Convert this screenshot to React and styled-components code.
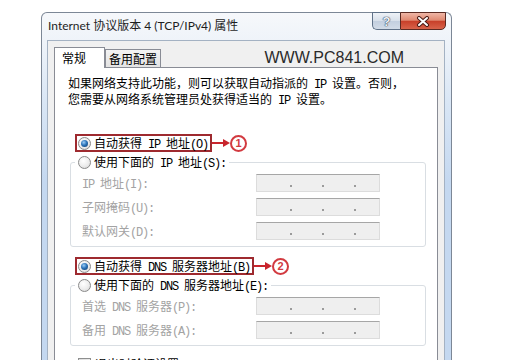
import React from "react";
import styled, { createGlobalStyle } from "styled-components";

const GlobalStyle = createGlobalStyle`
  html, body { margin: 0; padding: 0; background: #fff; }
  body { width: 520px; height: 360px; overflow: hidden; }
`;

const SONG = `"Noto Sans CJK SC", "Noto Sans", sans-serif`;

const Page = styled.div`
  box-sizing: border-box;
  height: 360px;
  overflow: hidden;
  padding: 12px 0 0 41px;
`;

const Window = styled.div`
  box-sizing: border-box;
  width: 411px;
  height: 400px;
  border: 1px solid #7c8796;
  border-bottom: none;
  border-radius: 6px 6px 0 0;
  background: linear-gradient(to bottom, #f6f8fb 0px, #eef3f9 30px, #d9e6f5 90px, #c4d8f0 170px);
  display: flex;
  flex-direction: column;
  padding: 0 6px 0 5px;
`;

const TitleBar = styled.div`
  height: 27px;
  display: flex;
  align-items: flex-start;
  padding-left: 1px;
`;

const Title = styled.div`
  font-family: Lato, "Noto Sans CJK SC", sans-serif;
  font-size: 12px;
  line-height: 25px;
  color: #1e1e1e;
  white-space: nowrap;
`;

const CaptionButtons = styled.div`
  margin-left: auto;
  margin-top: -1px;
  margin-right: -1px;
  display: flex;
`;

const HelpBtn = styled.div`
  box-sizing: border-box;
  width: 28px;
  height: 18px;
  border: 1px solid #5f7188;
  border-right: none;
  border-radius: 0 0 0 5px;
  background: linear-gradient(#eef2f7, #d8e0ea 48%, #c3cfdf 52%, #d2dbe7);
  display: grid;
  place-items: center;
  font-family: "Liberation Sans", sans-serif;
  font-weight: bold;
  font-size: 13px;
  line-height: 1;
  color: #eef2f7;
  text-shadow: 0 0 1px #3a4a60, 0 0 1px #3a4a60, 0 0 1px #3a4a60;
`;

const CloseBtn = styled.div`
  box-sizing: border-box;
  width: 46px;
  height: 18px;
  border: 1px solid #5b2a22;
  border-radius: 0 0 5px 0;
  background: linear-gradient(#efb6a6, #e08a72 45%, #c8402a 52%, #d8634a);
  display: grid;
  place-items: center;
`;

const Client = styled.div`
  flex: 1;
  box-sizing: border-box;
  background: #f0f0f0;
  border: 1px solid #a4b2c3;
  border-bottom: none;
  padding: 6px 6px 0 6px;
  display: flex;
  flex-direction: column;
`;

const TabStrip = styled.div`
  display: flex;
  align-items: flex-end;
  height: 21px;
  margin-bottom: -1px;
  position: relative;
  z-index: 1;
`;

const Tab = styled.div`
  box-sizing: border-box;
  height: ${(p) => (p.$active ? "21px" : "18px")};
  margin-bottom: ${(p) => (p.$active ? "0" : "1px")};
  width: ${(p) => p.$w}px;
  border: 1px solid #898c95;
  border-bottom: none;
  background: ${(p) => (p.$active ? "#fff" : "linear-gradient(#f3f3f3, #e3e3e3)")};
  display: flex;
  align-items: center;
  justify-content: ${(p) => (p.$active ? "flex-start" : "center")};
  padding-left: ${(p) => (p.$active ? "7px" : "0")};
  padding-bottom: ${(p) => (p.$active ? "1px" : "0")};
  font-family: ${SONG};
  font-size: 12px;
  color: #000;
`;

const Watermark = styled.div`
  margin-left: auto;
  margin-right: 34px;
  align-self: center;
  font-family: "Liberation Sans", Arial, sans-serif;
  font-size: 16px;
  color: #2a2a2a;
  padding-top: 1px;
`;

const TabPanel = styled.div`
  flex: 1;
  background: #fff;
  border: 1px solid #898c95;
  border-bottom: none;
  padding-top: 7px;
  display: flex;
  flex-direction: column;
  font-family: ${SONG};
  font-size: 12px;
  color: #000;
`;

const Latin = styled.span`
  font-family: "Liberation Mono", monospace;
  letter-spacing: -1.2px;
  line-height: 12px;
`;

const Intro = styled.p`
  margin: 0;
  padding-left: 13px;
  line-height: 15px;
  white-space: nowrap;
`;

const Marked = styled.div`
  display: flex;
  align-items: center;
  margin-top: ${(p) => p.$top}px;
  margin-left: 20px;
`;

const Highlight = styled.div`
  box-sizing: border-box;
  height: 18px;
  display: flex;
  align-items: center;
  gap: 3px;
  border: 2px solid #9e2a2f;
  padding: 0 2px 0 1px;
`;

const Radio = styled.span`
  box-sizing: border-box;
  flex: none;
  width: 13px;
  height: 13px;
  border-radius: 50%;
  border: 1px solid #8a8a8a;
  background: radial-gradient(circle at 40% 35%, #ffffff 0%, #ececec 55%, #d0d0d0 100%);
  display: grid;
  place-items: center;

  &::after {
    content: "";
    width: 7px;
    height: 7px;
    border-radius: 50%;
    display: ${(p) => (p.$checked ? "block" : "none")};
    background: radial-gradient(circle at 40% 35%, #9ccdf6 0%, #2c74ba 45%, #0d3462 100%);
  }
`;

const Checkbox = styled.span`
  box-sizing: border-box;
  flex: none;
  width: 13px;
  height: 13px;
  border: 1px solid #8e8f8f;
  background: linear-gradient(135deg, #dcdcdc, #fafafa);
`;

const OptionLabel = styled.span`
  white-space: nowrap;
  line-height: 14px;
`;

const Badge = styled.span`
  box-sizing: border-box;
  width: 17px;
  height: 17px;
  border-radius: 50%;
  border: 2px solid #d23a40;
  color: #d23a40;
  display: grid;
  place-items: center;
  font-family: "Liberation Sans", sans-serif;
  font-weight: bold;
  font-size: 11px;
  line-height: 1;
`;

const Group = styled.div`
  margin: 10px 11px 0 15px;
  border: 1px solid #d9dee3;
  border-radius: 3px;
  padding: 0 0 6px 11px;
  display: flex;
  flex-direction: column;
`;

const Legend = styled.div`
  align-self: flex-start;
  height: 16px;
  margin: -9px 0 0 -7px;
  padding: 0 3px;
  background: #fff;
  display: flex;
  align-items: center;
  gap: 3px;
`;

const Fields = styled.div`
  display: flex;
  flex-direction: column;
  gap: 6px;
  margin-top: 4px;
`;

const FieldRow = styled.div`
  display: grid;
  grid-template-columns: 174px 124px;
  align-items: center;
  height: 18px;
`;

const FieldLabel = styled.span`
  color: #a3a3a3;
  white-space: nowrap;
  line-height: 14px;
`;

const IpBox = styled.div`
  box-sizing: border-box;
  height: 18px;
  border: 1px solid #dcdcdc;
  border-top-color: #a6a6a6;
  background: #efefef;
  display: flex;
  align-items: flex-end;
  gap: 30px;
  padding: 0 0 4px 33px;
`;

const Dot = styled.span`
  width: 2px;
  height: 2px;
  background: #9b9b9b;
`;

const CheckRow = styled.div`
  display: flex;
  align-items: center;
  gap: 4px;
  margin: 11px 0 0 23px;
`;

// SimSun-like metrics: ASCII runs get a half-width monospace face
function T({ children }) {
  return String(children)
    .split(/([\x20-\x7e]+)/)
    .map((s, i) =>
      s === "" ? null : /[\x20-\x7e]/.test(s) ? <Latin key={i}>{s}</Latin> : s
    );
}

function Arrow() {
  return (
    <svg width="18" height="10" viewBox="0 0 18 10">
      <line x1="0" y1="5" x2="12" y2="5" stroke="#c9252d" strokeWidth="2" />
      <polygon points="11,1 18,5 11,9" fill="#c9252d" />
    </svg>
  );
}

function CloseGlyph() {
  return (
    <svg width="14" height="11" viewBox="0 0 14 11">
      <path d="M3 2 L11 9 M11 2 L3 9" stroke="#4a1a14" strokeWidth="4" strokeLinecap="round" />
      <path d="M3 2 L11 9 M11 2 L3 9" stroke="#fff" strokeWidth="2" strokeLinecap="round" />
    </svg>
  );
}

function IpField({ label }) {
  return (
    <FieldRow>
      <FieldLabel>
        <T>{label}</T>
      </FieldLabel>
      <IpBox>
        <Dot />
        <Dot />
        <Dot />
      </IpBox>
    </FieldRow>
  );
}

function Option({ checked, label }) {
  return (
    <>
      <Radio $checked={checked} />
      <OptionLabel>
        <T>{label}</T>
      </OptionLabel>
    </>
  );
}

export default function App() {
  return (
    <Page>
      <GlobalStyle />
      <Window>
        <TitleBar>
          <Title>Internet 协议版本 4 (TCP/IPv4) 属性</Title>
          <CaptionButtons>
            <HelpBtn>?</HelpBtn>
            <CloseBtn>
              <CloseGlyph />
            </CloseBtn>
          </CaptionButtons>
        </TitleBar>
        <Client>
          <TabStrip>
            <Tab $active $w={51}>常规</Tab>
            <Tab $w={56}>备用配置</Tab>
            <Watermark>WWW.PC841.COM</Watermark>
          </TabStrip>
          <TabPanel>
            <Intro>
              <T>如果网络支持此功能，则可以获取自动指派的 IP 设置。否则，</T>
              <br />
              <T>您需要从网络系统管理员处获得适当的 IP 设置。</T>
            </Intro>

            <Marked $top={27}>
              <Highlight>
                <Option checked label="自动获得 IP 地址(O)" />
              </Highlight>
              <Arrow />
              <Badge>1</Badge>
            </Marked>
            <Group>
              <Legend>
                <Option label="使用下面的 IP 地址(S):" />
              </Legend>
              <Fields>
                <IpField label="IP 地址(I):" />
                <IpField label="子网掩码(U):" />
                <IpField label="默认网关(D):" />
              </Fields>
            </Group>

            <Marked $top={10}>
              <Highlight>
                <Option checked label="自动获得 DNS 服务器地址(B)" />
              </Highlight>
              <Arrow />
              <Badge>2</Badge>
            </Marked>
            <Group>
              <Legend>
                <Option label="使用下面的 DNS 服务器地址(E):" />
              </Legend>
              <Fields>
                <IpField label="首选 DNS 服务器(P):" />
                <IpField label="备用 DNS 服务器(A):" />
              </Fields>
            </Group>

            <CheckRow>
              <Checkbox />
              <OptionLabel>
                <T>退出时验证设置(L)</T>
              </OptionLabel>
            </CheckRow>
          </TabPanel>
        </Client>
      </Window>
    </Page>
  );
}
